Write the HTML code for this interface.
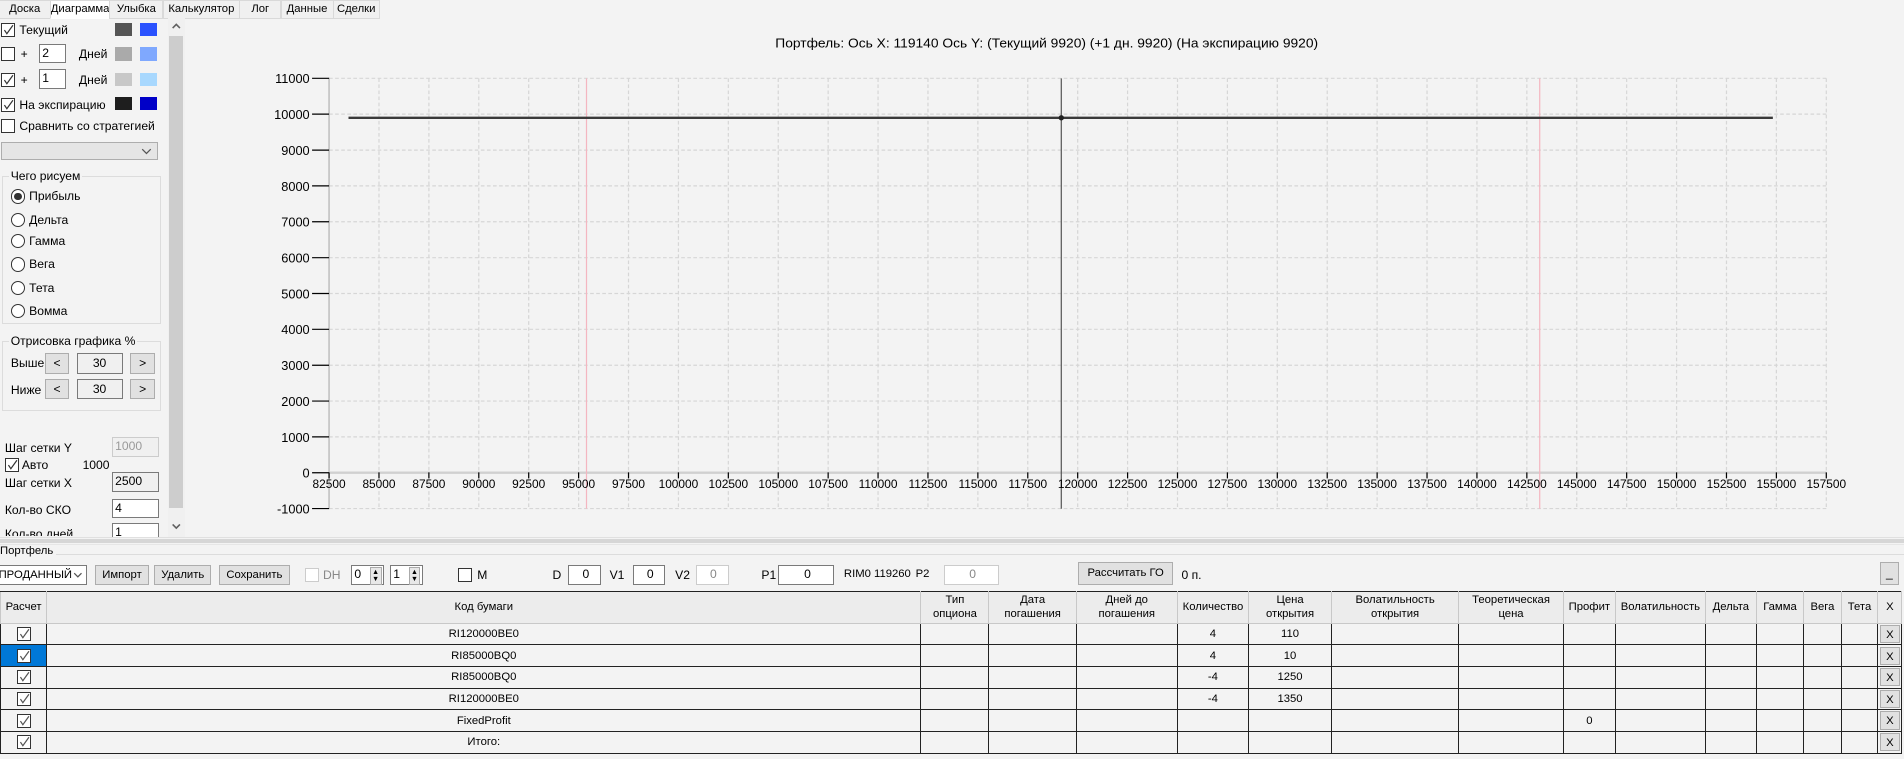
<!DOCTYPE html>
<html><head><meta charset="utf-8">
<style>
html,body{margin:0;padding:0;background:#f3f3f3;overflow:hidden}
#w{position:relative;width:1568px;height:625px;zoom:1.21429;font-family:"Liberation Sans",Arial,sans-serif;font-size:10px;color:#000;background:#f3f3f3;overflow:hidden}
.a{position:absolute;white-space:nowrap}
.tab{position:absolute;top:0;height:14px;line-height:14px;border:1px solid #d9d9d9;background:#f0f0f0;text-align:center;font-size:9.3px;overflow:hidden;white-space:nowrap}
.cb{position:absolute;width:10px;height:10px;border:1px solid #333;background:#fff}
.cb svg{position:absolute;left:0;top:0}
.sw{position:absolute;width:14px;height:11px}
.in{position:absolute;height:14px;border:1px solid #7a7a7a;background:#fff;line-height:14px;padding-left:2px;box-sizing:border-box;height:16px}
.btn{position:absolute;border:1px solid #adadad;background:#e1e1e1;text-align:center;box-sizing:border-box;line-height:15px}
.rad{position:absolute;width:10px;height:10px;border:1px solid #333;border-radius:50%;background:#fff}
.grp{position:absolute;border:1px solid #dcdcdc}
.grp span{position:absolute;top:-7px;left:5px;background:#f3f3f3;padding:0 1px}
table{position:absolute;left:0;top:487px;border-collapse:collapse;table-layout:fixed;font-size:9.3px}
td{border:1px solid #222;height:17px;text-align:center;padding:0;background:#f3f3f3}
th{border:1px solid #c8c8c8;border-top:1px solid #222;height:25px;font-weight:normal;background:#ececec;padding:0;line-height:11px;font-size:9.3px;overflow:hidden}
.x{display:block;margin:0 auto;width:16px;height:15px;border:1px solid #adadad;background:#e1e1e1;line-height:15px;box-sizing:border-box}
</style></head><body><div id="w">

<!-- tabs -->
<div class="tab" style="left:-1px;width:41px">Доска</div>
<div class="tab" style="left:41px;width:48px;background:#fff;border-bottom-color:#fff">Диаграмма</div>
<div class="tab" style="left:90px;width:43px">Улыбка</div>
<div class="tab" style="left:134px;width:62px">Калькулятор</div>
<div class="tab" style="left:197px;width:33px">Лог</div>
<div class="tab" style="left:231px;width:42px">Данные</div>
<div class="tab" style="left:274px;width:37px">Сделки</div>

<!-- left panel -->
<div class="cb" style="left:1px;top:19px"><svg width="10" height="10"><polyline points="2,5 4,8 9,1" fill="none" stroke="#333" stroke-width="1"/></svg></div>
<div class="a" style="left:16px;top:19px">Текущий</div>
<div class="sw" style="left:95px;top:19px;background:#555"></div><div class="sw" style="left:115px;top:19px;background:#2a52fe"></div>

<div class="cb" style="left:1px;top:39px"></div>
<div class="a" style="left:17px;top:39px">+</div>
<div class="in" style="left:32px;top:36px;width:22px">2</div>
<div class="a" style="left:65px;top:39px">Дней</div>
<div class="sw" style="left:95px;top:39px;background:#aaa"></div><div class="sw" style="left:115px;top:39px;background:#7fa8fe"></div>

<div class="cb" style="left:1px;top:60px"><svg width="10" height="10"><polyline points="2,5 4,8 9,1" fill="none" stroke="#333"/></svg></div>
<div class="a" style="left:17px;top:60px">+</div>
<div class="in" style="left:32px;top:57px;width:22px">1</div>
<div class="a" style="left:65px;top:60px">Дней</div>
<div class="sw" style="left:95px;top:60px;background:#c8c8c8"></div><div class="sw" style="left:115px;top:60px;background:#a8d8fe"></div>

<div class="cb" style="left:1px;top:81px"><svg width="10" height="10"><polyline points="2,5 4,8 9,1" fill="none" stroke="#333"/></svg></div>
<div class="a" style="left:16px;top:81px">На экспирацию</div>
<div class="sw" style="left:95px;top:80px;background:#1e1e1e"></div><div class="sw" style="left:115px;top:80px;background:#0000c8"></div>

<div class="cb" style="left:1px;top:98px"></div>
<div class="a" style="left:16px;top:98px">Сравнить со стратегией</div>

<div class="a" style="left:1px;top:117px;width:129px;height:15px;border:1px solid #adadad;background:#e5e5e5;box-sizing:border-box"><svg style="position:absolute;right:4px;top:4px" width="9" height="6"><polyline points="1,1 4.5,4.5 8,1" fill="none" stroke="#555"/></svg></div>

<div class="grp" style="left:2px;top:145px;width:129px;height:120px"><span>Чего рисуем</span></div>
<div class="rad" style="left:9px;top:156px"><div style="position:absolute;left:2px;top:2px;width:6px;height:6px;border-radius:50%;background:#333"></div></div>
<div class="a" style="left:24px;top:156px">Прибыль</div>
<div class="rad" style="left:9px;top:175px"></div><div class="a" style="left:24px;top:175px">Дельта</div>
<div class="rad" style="left:9px;top:193px"></div><div class="a" style="left:24px;top:193px">Гамма</div>
<div class="rad" style="left:9px;top:212px"></div><div class="a" style="left:24px;top:212px">Вега</div>
<div class="rad" style="left:9px;top:231px"></div><div class="a" style="left:24px;top:231px">Тета</div>
<div class="rad" style="left:9px;top:250px"></div><div class="a" style="left:24px;top:250px">Вомма</div>

<div class="grp" style="left:2px;top:281px;width:129px;height:56px"><span>Отрисовка графика %</span></div>
<div class="a" style="left:9px;top:293px">Выше</div>
<div class="btn" style="left:37px;top:291px;width:20px;height:17px">&lt;</div>
<div class="btn" style="left:63px;top:291px;width:38px;height:17px;background:#f0f0f0;border-color:#7a7a7a">30</div>
<div class="btn" style="left:107px;top:291px;width:21px;height:17px">&gt;</div>
<div class="a" style="left:9px;top:315px">Ниже</div>
<div class="btn" style="left:37px;top:312px;width:20px;height:17px">&lt;</div>
<div class="btn" style="left:63px;top:312px;width:38px;height:17px;background:#f0f0f0;border-color:#7a7a7a">30</div>
<div class="btn" style="left:107px;top:312px;width:21px;height:17px">&gt;</div>

<div class="a" style="left:4px;top:363px">Шаг сетки Y</div>
<div class="in" style="left:92px;top:360px;width:39px;background:#f0f0f0;border-color:#ccc;color:#999">1000</div>
<div class="cb" style="left:4px;top:377px"><svg width="10" height="10"><polyline points="2,5 4,8 9,1" fill="none" stroke="#333"/></svg></div>
<div class="a" style="left:18px;top:377px">Авто</div>
<div class="a" style="left:68px;top:377px">1000</div>
<div class="a" style="left:4px;top:392px">Шаг сетки X</div>
<div class="in" style="left:92px;top:389px;width:39px;background:#f0f0f0">2500</div>
<div class="a" style="left:4px;top:414px">Кол-во СКО</div>
<div class="in" style="left:92px;top:411px;width:39px">4</div>
<div class="a" style="left:4px;top:434px;height:7px;overflow:hidden">Кол-во дней</div>
<div class="in" style="left:92px;top:431px;width:39px;height:11px;border-bottom:none">1</div>

<!-- scrollbar -->
<div class="a" style="left:138px;top:15px;width:14px;height:427px;background:#f0f0f0"></div>
<div class="a" style="left:139px;top:30px;width:12px;height:388px;background:#cdcdcd"></div>
<svg class="a" style="left:139px;top:18px" width="12" height="8"><polyline points="3,5 6,2 9,5" fill="none" stroke="#606060" stroke-width="1.3"/></svg>
<svg class="a" style="left:139px;top:430px" width="12" height="8"><polyline points="3,2 6,5 9,2" fill="none" stroke="#606060" stroke-width="1.3"/></svg>

<!-- chart -->
<svg class="a" style="left:0;top:0" width="1568" height="445" font-family="Liberation Sans, Arial, sans-serif" font-size="10.5">
<text x="862" y="39" text-anchor="middle" font-size="11" textLength="447" lengthAdjust="spacingAndGlyphs">Портфель: Ось X: 119140 Ось Y:  (Текущий 9920)  (+1 дн. 9920)  (На экспирацию 9920)</text>
<g stroke="#d6d6d6" stroke-dasharray="3,2" stroke-width="1">
<line x1="271" y1="64.5" x2="1504" y2="64.5"/><line x1="271" y1="94" x2="1504" y2="94"/><line x1="271" y1="123.6" x2="1504" y2="123.6"/><line x1="271" y1="153.1" x2="1504" y2="153.1"/><line x1="271" y1="182.6" x2="1504" y2="182.6"/><line x1="271" y1="212.2" x2="1504" y2="212.2"/><line x1="271" y1="241.7" x2="1504" y2="241.7"/><line x1="271" y1="271.2" x2="1504" y2="271.2"/><line x1="271" y1="300.8" x2="1504" y2="300.8"/><line x1="271" y1="330.3" x2="1504" y2="330.3"/><line x1="271" y1="359.8" x2="1504" y2="359.8"/><line x1="271" y1="418.8" x2="1504" y2="418.8"/>
<line x1="312.1" y1="64.5" x2="312.1" y2="419"/><line x1="353.2" y1="64.5" x2="353.2" y2="419"/><line x1="394.3" y1="64.5" x2="394.3" y2="419"/><line x1="435.4" y1="64.5" x2="435.4" y2="419"/><line x1="476.5" y1="64.5" x2="476.5" y2="419"/><line x1="517.6" y1="64.5" x2="517.6" y2="419"/><line x1="558.7" y1="64.5" x2="558.7" y2="419"/><line x1="599.8" y1="64.5" x2="599.8" y2="419"/><line x1="640.9" y1="64.5" x2="640.9" y2="419"/><line x1="682" y1="64.5" x2="682" y2="419"/><line x1="723.1" y1="64.5" x2="723.1" y2="419"/><line x1="764.2" y1="64.5" x2="764.2" y2="419"/><line x1="805.3" y1="64.5" x2="805.3" y2="419"/><line x1="846.4" y1="64.5" x2="846.4" y2="419"/><line x1="887.5" y1="64.5" x2="887.5" y2="419"/><line x1="928.6" y1="64.5" x2="928.6" y2="419"/><line x1="969.7" y1="64.5" x2="969.7" y2="419"/><line x1="1010.8" y1="64.5" x2="1010.8" y2="419"/><line x1="1051.9" y1="64.5" x2="1051.9" y2="419"/><line x1="1093" y1="64.5" x2="1093" y2="419"/><line x1="1134.1" y1="64.5" x2="1134.1" y2="419"/><line x1="1175.2" y1="64.5" x2="1175.2" y2="419"/><line x1="1216.3" y1="64.5" x2="1216.3" y2="419"/><line x1="1257.4" y1="64.5" x2="1257.4" y2="419"/><line x1="1298.5" y1="64.5" x2="1298.5" y2="419"/><line x1="1339.6" y1="64.5" x2="1339.6" y2="419"/><line x1="1380.7" y1="64.5" x2="1380.7" y2="419"/><line x1="1421.8" y1="64.5" x2="1421.8" y2="419"/><line x1="1462.9" y1="64.5" x2="1462.9" y2="419"/><line x1="1504" y1="64.5" x2="1504" y2="419"/>
</g>
<line x1="271" y1="64" x2="271" y2="419" stroke="#c8c8c8" stroke-width="1.5"/>
<line x1="271" y1="389.3" x2="1504" y2="389.3" stroke="#d0d0d0" stroke-width="2"/>
<line x1="483" y1="64.5" x2="483" y2="419" stroke="#f4b6c0" stroke-width="1"/>
<line x1="1268" y1="64.5" x2="1268" y2="419" stroke="#f4b6c0" stroke-width="1"/>
<line x1="874" y1="64.5" x2="874" y2="419" stroke="#555" stroke-width="1"/>
<line x1="287" y1="97" x2="1460" y2="97" stroke="#3a3a3a" stroke-width="2"/>
<circle cx="874" cy="97" r="2.2" fill="#222"/>
<g stroke="#000" stroke-width="1">
<line x1="257" y1="64.5" x2="271" y2="64.5"/><line x1="257" y1="94" x2="271" y2="94"/><line x1="257" y1="123.6" x2="271" y2="123.6"/><line x1="257" y1="153.1" x2="271" y2="153.1"/><line x1="257" y1="182.6" x2="271" y2="182.6"/><line x1="257" y1="212.2" x2="271" y2="212.2"/><line x1="257" y1="241.7" x2="271" y2="241.7"/><line x1="257" y1="271.2" x2="271" y2="271.2"/><line x1="257" y1="300.8" x2="271" y2="300.8"/><line x1="257" y1="330.3" x2="271" y2="330.3"/><line x1="257" y1="359.8" x2="271" y2="359.8"/><line x1="257" y1="389.3" x2="271" y2="389.3"/><line x1="257" y1="418.8" x2="271" y2="418.8"/>
</g>
<g text-anchor="end">
<text x="255" y="68.5">11000</text><text x="255" y="98">10000</text><text x="255" y="127.6">9000</text><text x="255" y="157.1">8000</text><text x="255" y="186.6">7000</text><text x="255" y="216.2">6000</text><text x="255" y="245.7">5000</text><text x="255" y="275.2">4000</text><text x="255" y="304.8">3000</text><text x="255" y="334.3">2000</text><text x="255" y="363.8">1000</text><text x="255" y="393.3">0</text><text x="255" y="422.8">-1000</text>
</g>
<g stroke="#000"><line x1="271" y1="389" x2="271" y2="394"/><line x1="312.1" y1="389" x2="312.1" y2="394"/><line x1="353.2" y1="389" x2="353.2" y2="394"/><line x1="394.3" y1="389" x2="394.3" y2="394"/><line x1="435.4" y1="389" x2="435.4" y2="394"/><line x1="476.5" y1="389" x2="476.5" y2="394"/><line x1="517.6" y1="389" x2="517.6" y2="394"/><line x1="558.7" y1="389" x2="558.7" y2="394"/><line x1="599.8" y1="389" x2="599.8" y2="394"/><line x1="640.9" y1="389" x2="640.9" y2="394"/><line x1="682" y1="389" x2="682" y2="394"/><line x1="723.1" y1="389" x2="723.1" y2="394"/><line x1="764.2" y1="389" x2="764.2" y2="394"/><line x1="805.3" y1="389" x2="805.3" y2="394"/><line x1="846.4" y1="389" x2="846.4" y2="394"/><line x1="887.5" y1="389" x2="887.5" y2="394"/><line x1="928.6" y1="389" x2="928.6" y2="394"/><line x1="969.7" y1="389" x2="969.7" y2="394"/><line x1="1010.8" y1="389" x2="1010.8" y2="394"/><line x1="1051.9" y1="389" x2="1051.9" y2="394"/><line x1="1093" y1="389" x2="1093" y2="394"/><line x1="1134.1" y1="389" x2="1134.1" y2="394"/><line x1="1175.2" y1="389" x2="1175.2" y2="394"/><line x1="1216.3" y1="389" x2="1216.3" y2="394"/><line x1="1257.4" y1="389" x2="1257.4" y2="394"/><line x1="1298.5" y1="389" x2="1298.5" y2="394"/><line x1="1339.6" y1="389" x2="1339.6" y2="394"/><line x1="1380.7" y1="389" x2="1380.7" y2="394"/><line x1="1421.8" y1="389" x2="1421.8" y2="394"/><line x1="1462.9" y1="389" x2="1462.9" y2="394"/><line x1="1504" y1="389" x2="1504" y2="394"/></g>
<g text-anchor="middle" font-size="9.8">
<text x="271" y="402">82500</text><text x="312.1" y="402">85000</text><text x="353.2" y="402">87500</text><text x="394.3" y="402">90000</text><text x="435.4" y="402">92500</text><text x="476.5" y="402">95000</text><text x="517.6" y="402">97500</text><text x="558.7" y="402">100000</text><text x="599.8" y="402">102500</text><text x="640.9" y="402">105000</text><text x="682" y="402">107500</text><text x="723.1" y="402">110000</text><text x="764.2" y="402">112500</text><text x="805.3" y="402">115000</text><text x="846.4" y="402">117500</text><text x="887.5" y="402">120000</text><text x="928.6" y="402">122500</text><text x="969.7" y="402">125000</text><text x="1010.8" y="402">127500</text><text x="1051.9" y="402">130000</text><text x="1093" y="402">132500</text><text x="1134.1" y="402">135000</text><text x="1175.2" y="402">137500</text><text x="1216.3" y="402">140000</text><text x="1257.4" y="402">142500</text><text x="1298.5" y="402">145000</text><text x="1339.6" y="402">147500</text><text x="1380.7" y="402">150000</text><text x="1421.8" y="402">152500</text><text x="1462.9" y="402">155000</text><text x="1504" y="402">157500</text>
</g>
</svg>

<!-- splitter -->
<div class="a" style="left:0;top:442px;width:1568px;height:1px;background:#e0e0e0"></div>
<div class="a" style="left:0;top:444px;width:1568px;height:3px;background:#d6d6d6"></div>
<div class="a" style="left:0;top:448px;width:1568px;height:1px;background:#e6e6e6"></div>

<!-- Portfolio group -->
<div class="a" style="left:0;top:456px;width:1568px;height:1px;background:#dcdcdc"></div>
<div class="a" style="left:0;top:449px;background:#f3f3f3;padding-right:2px;font-size:9.3px">Портфель</div>

<div class="a" style="left:-2px;top:465px;width:74px;height:17px;border:1px solid #7a7a7a;background:#fff;box-sizing:border-box;line-height:15px;font-size:9.3px;overflow:hidden">ПРОДАННЫЙ<svg style="position:absolute;right:3px;top:5px" width="8" height="5"><polyline points="1,1 4,4 7,1" fill="none" stroke="#555"/></svg></div>
<div class="btn" style="left:78px;top:465px;width:45px;height:17px;font-size:9.3px">Импорт</div>
<div class="btn" style="left:127px;top:465px;width:47px;height:17px;font-size:9.3px">Удалить</div>
<div class="btn" style="left:180px;top:465px;width:59px;height:17px;font-size:9.3px">Сохранить</div>
<div class="cb" style="left:251px;top:468px;border-color:#ccc"></div>
<div class="a" style="left:266px;top:468px;color:#888">DH</div>
<div class="in" style="left:289px;top:465px;width:27px;height:17px">0<div style="position:absolute;right:1px;top:1px;width:8px;height:13px;border:1px solid #aaa;background:#e8e8e8;font-size:6px;line-height:6px;text-align:center">▲<br>▼</div></div>
<div class="in" style="left:321px;top:465px;width:27px;height:17px">1<div style="position:absolute;right:1px;top:1px;width:8px;height:13px;border:1px solid #aaa;background:#e8e8e8;font-size:6px;line-height:6px;text-align:center">▲<br>▼</div></div>
<div class="cb" style="left:377px;top:468px"></div>
<div class="a" style="left:393px;top:468px">M</div>
<div class="a" style="left:455px;top:468px">D</div>
<div class="in" style="left:468px;top:465px;width:27px;height:17px;text-align:center">0</div>
<div class="a" style="left:502px;top:468px">V1</div>
<div class="in" style="left:521px;top:465px;width:27px;height:17px;text-align:center">0</div>
<div class="a" style="left:556px;top:468px">V2</div>
<div class="in" style="left:573px;top:465px;width:27px;height:17px;text-align:center;border-color:#ccc;color:#888">0</div>
<div class="a" style="left:627px;top:468px">P1</div>
<div class="in" style="left:641px;top:465px;width:46px;height:17px;text-align:center">0</div>
<div class="a" style="left:695px;top:468px;font-size:9.3px">RIM0 119260</div>
<div class="a" style="left:754px;top:468px;font-size:9.3px">P2</div>
<div class="in" style="left:777px;top:465px;width:46px;height:17px;text-align:center;border-color:#ccc;color:#888">0</div>
<div class="btn" style="left:888px;top:463px;width:78px;height:19px;line-height:17px;font-size:9.3px">Рассчитать ГО</div>
<div class="a" style="left:973px;top:468px">0 п.</div>
<div class="btn" style="left:1548px;top:463px;width:16px;height:19px;line-height:17px">_</div>

<table>
<colgroup><col style="width:38px"><col style="width:720px"><col style="width:56px"><col style="width:72px"><col style="width:83px"><col style="width:59px"><col style="width:68px"><col style="width:105px"><col style="width:86px"><col style="width:43px"><col style="width:74px"><col style="width:42px"><col style="width:39px"><col style="width:31px"><col style="width:30px"><col style="width:20px"></colgroup>
<tr><th>Расчет</th><th>Код бумаги</th><th>Тип<br>опциона</th><th>Дата<br>погашения</th><th>Дней до<br>погашения</th><th>Количество</th><th>Цена<br>открытия</th><th>Волатильность<br>открытия</th><th>Теоретическая<br>цена</th><th>Профит</th><th>Волатильность</th><th>Дельта</th><th>Гамма</th><th>Вега</th><th>Тета</th><th>X</th></tr>
<tr><td><span class="cb" style="position:relative;display:inline-block;vertical-align:middle"><svg width="10" height="10"><polyline points="2,5 4,8 9,1" fill="none" stroke="#555"/></svg></span></td><td>RI120000BE0</td><td></td><td></td><td></td><td>4</td><td>110</td><td></td><td></td><td></td><td></td><td></td><td></td><td></td><td></td><td><span class="x">X</span></td></tr>
<tr><td style="background:#0078d7"><span class="cb" style="position:relative;display:inline-block;vertical-align:middle"><svg width="10" height="10"><polyline points="2,5 4,8 9,1" fill="none" stroke="#555"/></svg></span></td><td>RI85000BQ0</td><td></td><td></td><td></td><td>4</td><td>10</td><td></td><td></td><td></td><td></td><td></td><td></td><td></td><td></td><td><span class="x">X</span></td></tr>
<tr><td><span class="cb" style="position:relative;display:inline-block;vertical-align:middle"><svg width="10" height="10"><polyline points="2,5 4,8 9,1" fill="none" stroke="#555"/></svg></span></td><td>RI85000BQ0</td><td></td><td></td><td></td><td>-4</td><td>1250</td><td></td><td></td><td></td><td></td><td></td><td></td><td></td><td></td><td><span class="x">X</span></td></tr>
<tr><td><span class="cb" style="position:relative;display:inline-block;vertical-align:middle"><svg width="10" height="10"><polyline points="2,5 4,8 9,1" fill="none" stroke="#555"/></svg></span></td><td>RI120000BE0</td><td></td><td></td><td></td><td>-4</td><td>1350</td><td></td><td></td><td></td><td></td><td></td><td></td><td></td><td></td><td><span class="x">X</span></td></tr>
<tr><td><span class="cb" style="position:relative;display:inline-block;vertical-align:middle"><svg width="10" height="10"><polyline points="2,5 4,8 9,1" fill="none" stroke="#555"/></svg></span></td><td>FixedProfit</td><td></td><td></td><td></td><td></td><td></td><td></td><td></td><td>0</td><td></td><td></td><td></td><td></td><td></td><td><span class="x">X</span></td></tr>
<tr><td><span class="cb" style="position:relative;display:inline-block;vertical-align:middle"><svg width="10" height="10"><polyline points="2,5 4,8 9,1" fill="none" stroke="#555"/></svg></span></td><td>Итого:</td><td></td><td></td><td></td><td></td><td></td><td></td><td></td><td></td><td></td><td></td><td></td><td></td><td></td><td><span class="x">X</span></td></tr>
</table>

</div></body></html>
